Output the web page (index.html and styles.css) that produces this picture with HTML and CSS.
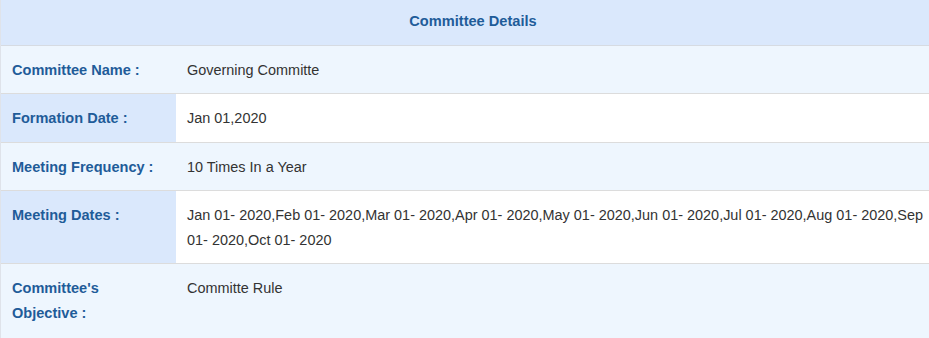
FILE: index.html
```html
<!DOCTYPE html>
<html lang="en">
<head>
<meta charset="utf-8">
<title>Committee Details</title>
<link rel="stylesheet" href="styles.css">
</head>
<body>
<div class="details">
  <div class="details-head">Committee Details</div>
  <div class="details-row row-light">
    <div class="cell label">Committee Name :</div>
    <div class="cell value">Governing Committe</div>
  </div>
  <div class="details-row row-split">
    <div class="cell label">Formation Date :</div>
    <div class="cell value">Jan 01,2020</div>
  </div>
  <div class="details-row row-light">
    <div class="cell label">Meeting Frequency :</div>
    <div class="cell value">10 Times In a Year</div>
  </div>
  <div class="details-row row-split">
    <div class="cell label">Meeting Dates :</div>
    <div class="cell value">Jan 01- 2020,Feb 01- 2020,Mar 01- 2020,Apr 01- 2020,May 01- 2020,Jun 01- 2020,Jul 01- 2020,Aug 01- 2020,Sep 01- 2020,Oct 01- 2020</div>
  </div>
  <div class="details-row row-light row-last">
    <div class="cell label">Committee's Objective :</div>
    <div class="cell value">Committe Rule</div>
  </div>
</div>
</body>
</html>
```

FILE: styles.css
```css
html, body {
  margin: 0;
  padding: 0;
  overflow: hidden;
  background: #ffffff;
}

body {
  font-family: "Liberation Sans", Arial, sans-serif;
  font-size: 14.45px;
  color: #333333;
}

.details {
  width: 944px;
  border-left: 1px solid #dfe3ea;
}

.details-head {
  background: #dae8fc;
  color: #1f5c99;
  font-weight: bold;
  font-size: 14.6px;
  line-height: 25.2px;
  text-align: center;
  padding: 9px 0 11px;
  border-bottom: 1px solid #d6dbe2;
}

.details-row {
  display: grid;
  grid-template-columns: 175px 1fr;
  border-bottom: 1px solid #dcdcdc;
}

.cell {
  padding: 12px 11px 10px;
  line-height: 25.2px;
}

.row-last .cell {
  padding-bottom: 16px;
}

.label {
  color: #1f5c99;
  font-weight: bold;
  font-size: 14.55px;
}

.value {
  color: #333333;
}

.row-light {
  background: #eef6fe;
}

.row-split .label {
  background: #dae8fc;
}

.row-split .value {
  background: #ffffff;
}
```
